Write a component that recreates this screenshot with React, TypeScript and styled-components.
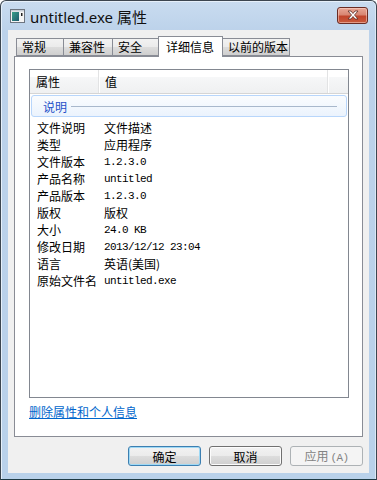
import styled, { createGlobalStyle } from "styled-components";

const GlobalStyle = createGlobalStyle`
  html, body {
    margin: 0;
    padding: 0;
    background: #ffffff;
  }
  body {
    font-family: "Noto Sans CJK SC", "Noto Sans", sans-serif;
    font-size: 12px;
  }
`;

const CJK = `"Noto Sans CJK SC", "Noto Sans", sans-serif`;
const MONO = `"Liberation Mono", "Noto Sans CJK SC", monospace`;

type Row = { label: string; value: string; mono?: boolean };

const rows: Row[] = [
  { label: "文件说明", value: "文件描述" },
  { label: "类型", value: "应用程序" },
  { label: "文件版本", value: "1.2.3.0", mono: true },
  { label: "产品名称", value: "untitled", mono: true },
  { label: "产品版本", value: "1.2.3.0", mono: true },
  { label: "版权", value: "版权" },
  { label: "大小", value: "24.0 KB", mono: true },
  { label: "修改日期", value: "2013/12/12 23:04", mono: true },
  { label: "语言", value: "英语(美国)" },
  { label: "原始文件名", value: "untitled.exe", mono: true },
];

const tabs = ["常规", "兼容性", "安全", "详细信息", "以前的版本"];
// widths incl. the shared 1px border
const tabWidths = [48, 50, 47, 65, 68];

const AppIcon = () => (
  <svg width="15" height="14" viewBox="0 0 15 14">
    <defs>
      <linearGradient id="ig" x1="0" y1="0" x2="1" y2="1">
        <stop offset="0" stopColor="#3aa08a" />
        <stop offset="1" stopColor="#1d5a6e" />
      </linearGradient>
    </defs>
    <rect x="0.5" y="0.5" width="14" height="13" fill="#f4f4f4" stroke="#6d7580" />
    <rect x="1" y="1" width="13" height="1.5" fill="#c8ced6" />
    <rect x="2" y="3" width="7" height="9" fill="url(#ig)" />
    <rect x="11" y="4" width="1.5" height="3" fill="#222" />
  </svg>
);

const CloseIcon = () => (
  <svg width="14" height="10" viewBox="0 0 14 10">
    <path
      d="M2 1 L5 1 L7 3.5 L9 1 L12 1 L8.5 5 L12 9 L9 9 L7 6.5 L5 9 L2 9 L5.5 5 Z"
      fill="#ffffff"
      stroke="#5a2a22"
      strokeWidth="0.8"
      strokeLinejoin="round"
    />
  </svg>
);

const App = () => {
  return (
    <>
      <GlobalStyle />
      <Window>
        <TitleBar>
          <AppIcon />
          <Title>untitled.exe 属性</Title>
          <CloseButton>
            <CloseIcon />
          </CloseButton>
        </TitleBar>
        <Client>
          <TabRow>
            {tabs.map((t, i) => (
              <Tab key={t} $active={i === 3} $w={tabWidths[i]}>
                {t}
              </Tab>
            ))}
          </TabRow>
          <TabPage>
            <ListView>
              <Header>
                <HeaderCell $w={69}>属性</HeaderCell>
                <HeaderCell $w={229}>值</HeaderCell>
                <HeaderFill />
              </Header>
              <Group>
                <GroupLabel>说明</GroupLabel>
                <GroupLine />
              </Group>
              <Rows>
                {rows.map((r) => (
                  <ItemRow key={r.label}>
                    <Label>{r.label}</Label>
                    <Value $mono={r.mono}>{r.value}</Value>
                  </ItemRow>
                ))}
              </Rows>
            </ListView>
            <LinkText>删除属性和个人信息</LinkText>
          </TabPage>
          <ButtonRow>
            <Button $default>确定</Button>
            <Button>取消</Button>
            <Button disabled>
              应用<Mnemonic>(A)</Mnemonic>
            </Button>
          </ButtonRow>
        </Client>
      </Window>
    </>
  );
};

const Window = styled.div`
  width: 377px;
  height: 480px;
  box-sizing: border-box;
  border: 1px solid #3c4650;
  border-bottom-color: #1e3a44;
  border-radius: 6px 6px 0 0;
  background: linear-gradient(#c9dcf0 0px, #bcd2ea 30px, #b9d1ea 100%);
  display: flex;
  flex-direction: column;
  box-shadow: inset 1px 1px 0 #e6f0fa, inset -1px 0 0 #dbe8f5;
`;

const TitleBar = styled.div`
  height: 29px;
  display: flex;
  align-items: center;
  padding: 0 8px 0 9px;
  gap: 5px;
`;

const Title = styled.div`
  font-family: "Noto Sans", "Noto Sans CJK SC", sans-serif;
  font-size: 15px;
  color: #101010;
  flex: 1;
  margin-top: 1px;
`;

const CloseButton = styled.div`
  width: 31px;
  height: 17px;
  box-sizing: border-box;
  margin-top: -1px;
  border: 1px solid #6a2c24;
  border-radius: 3px;
  background: linear-gradient(#e8a796 0%, #d88672 45%, #c1452c 55%, #c85a3c 100%);
  display: flex;
  align-items: center;
  justify-content: center;
  box-shadow: inset 0 0 0 1px rgba(255, 220, 210, 0.5);
`;

const Client = styled.div`
  flex: 1;
  margin: 0 7px 6px 7px;
  background: #f0f0f0;
  display: flex;
  flex-direction: column;
  padding: 6px 6px 0 6px;
`;

const TabRow = styled.div`
  display: flex;
  align-items: flex-end;
  height: 20px;
  padding-left: 3px;
  position: relative;
  z-index: 1;
`;

const Tab = styled.div<{ $active?: boolean; $w: number }>`
  width: ${(p) => p.$w}px;
  box-sizing: border-box;
  height: ${(p) => (p.$active ? 21 : 18)}px;
  margin-bottom: ${(p) => (p.$active ? -1 : 0)}px;
  border: 1px solid #898c95;
  border-bottom: ${(p) => (p.$active ? "none" : "1px solid #898c95")};
  margin-left: -1px;
  background: ${(p) =>
    p.$active
      ? "#ffffff"
      : "linear-gradient(#f2f2f2 0%, #ebebeb 50%, #dddddd 50%, #cfcfcf 100%)"};
  font-family: ${CJK};
  font-size: 12px;
  color: #000;
  padding-left: ${(p) => (p.$active ? 7 : 5)}px;
  line-height: ${(p) => (p.$active ? 19 : 16)}px;
  white-space: nowrap;
`;

const TabPage = styled.div`
  height: 381px;
  box-sizing: border-box;
  border: 1px solid #898c95;
  background: #ffffff;
  padding: 12px 13px 0 14px;
  display: flex;
  flex-direction: column;
`;

const ListView = styled.div`
  height: 329px;
  box-sizing: border-box;
  border: 1px solid #828790;
  background: #ffffff;
  display: flex;
  flex-direction: column;
`;

const Header = styled.div`
  height: 23px;
  display: flex;
  background: linear-gradient(#ffffff 0%, #ffffff 30%, #f6f7f8 31%, #eff0f1 100%);
  border-bottom: 1px solid #d5d5d5;
`;

const HeaderCell = styled.div<{ $w: number }>`
  width: ${(p) => p.$w}px;
  box-sizing: border-box;
  padding-left: 6px;
  line-height: 23px;
  font-family: ${CJK};
  font-size: 12px;
  color: #000;
  border-right: 1px solid #e2e3e4;
  box-shadow: 1px 0 0 #ffffff;
`;

const HeaderFill = styled.div`
  flex: 1;
`;

const Group = styled.div`
  margin: 1px 1px 0 1px;
  height: 22px;
  box-sizing: border-box;
  border: 1px solid #b8d6fb;
  border-radius: 3px;
  background: linear-gradient(#fafcfe, #ebf3fd);
  display: flex;
  align-items: center;
  padding: 0 9px 0 11px;
  gap: 4px;
`;

const GroupLabel = styled.div`
  font-family: ${CJK};
  font-size: 12px;
  color: #1e50c8;
`;

const GroupLine = styled.div`
  flex: 1;
  height: 1px;
  background: #a8b8cc;
  margin-top: 1px;
`;

const Rows = styled.div`
  padding-top: 2px;
  display: flex;
  flex-direction: column;
`;

const ItemRow = styled.div`
  height: 17px;
  display: flex;
  align-items: center;
  padding-left: 7px;
`;

const Label = styled.div`
  width: 67px;
  font-family: ${CJK};
  font-size: 12px;
  color: #000;
  white-space: nowrap;
`;

const Value = styled.div<{ $mono?: boolean }>`
  font-family: ${(p) => (p.$mono ? MONO : CJK)};
  font-size: ${(p) => (p.$mono ? "11px" : "12px")};
  letter-spacing: ${(p) => (p.$mono ? "-0.6px" : "0")};
  color: #000;
  white-space: nowrap;
`;

const LinkText = styled.div`
  margin-top: 6px;
  font-family: ${CJK};
  font-size: 12px;
  color: #0066cc;
  text-decoration: underline;
  line-height: 16px;
`;

const ButtonRow = styled.div`
  display: flex;
  justify-content: flex-end;
  gap: 8px;
  padding: 9px 0 0 0;
`;

const Button = styled.button<{ $default?: boolean }>`
  width: 73px;
  height: 20px;
  box-sizing: border-box;
  padding: 0;
  border-radius: 3px;
  border: 1px solid ${(p) => (p.$default ? "#3c7fb1" : "#707070")};
  background: linear-gradient(#f2f2f2 0%, #ebebeb 50%, #dddddd 50%, #cfcfcf 100%);
  box-shadow: ${(p) =>
    p.$default ? "inset 0 0 0 1px #9fd9f5" : "inset 0 0 0 1px #fcfcfc"};
  font-family: ${CJK};
  font-size: 12px;
  color: #000;
  line-height: 17px;

  &:disabled {
    border-color: #adb2b5;
    background: #f4f4f4;
    box-shadow: none;
    color: #838383;
  }
`;

const Mnemonic = styled.span`
  font-family: ${MONO};
  font-size: 11px;
  letter-spacing: -0.6px;
  margin-left: 2px;
`;

export default App;
